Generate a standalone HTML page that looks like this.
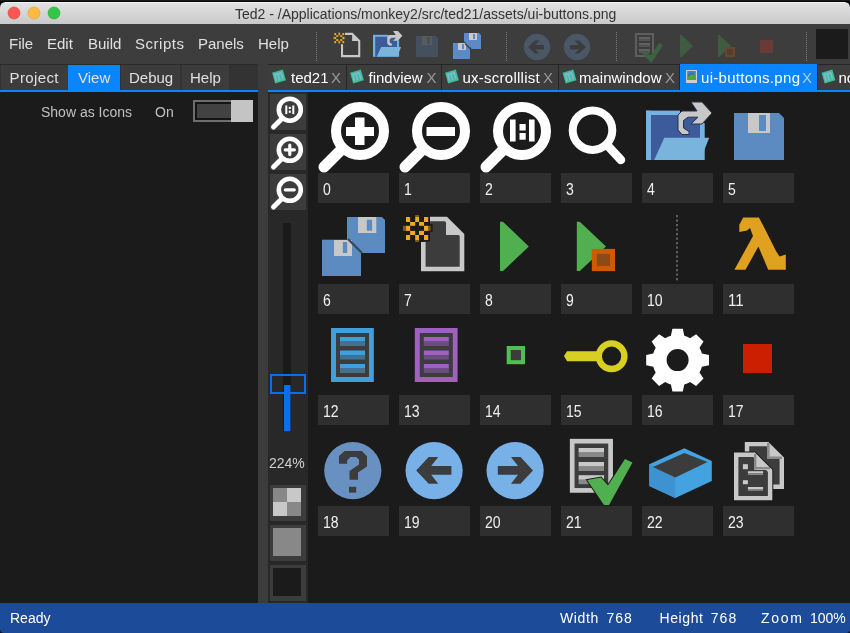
<!DOCTYPE html>
<html><head><meta charset="utf-8">
<style>
html,body{margin:0;padding:0;background:#000;width:850px;height:633px;overflow:hidden}
svg{display:block;will-change:transform}
text{font-family:"Liberation Sans",sans-serif}
</style></head><body>
<svg width="850" height="633" viewBox="0 0 850 633">
<defs>
<linearGradient id="tb" x1="0" y1="0" x2="0" y2="1">
<stop offset="0" stop-color="#e3e3e3"/><stop offset="1" stop-color="#c9c9c9"/>
</linearGradient>
</defs>
<!-- window bg -->
<rect x="0" y="0" width="850" height="633" fill="#050608"/>
<rect x="0" y="0" width="850" height="1" fill="#1a1a1a"/>
<!-- title bar -->
<path d="M0,8 Q0,2 6,2 L844,2 Q850,2 850,8 L850,24 L0,24 Z" fill="url(#tb)"/>
<rect x="5" y="2" width="840" height="1" fill="#f4f4f4"/>
<circle cx="14" cy="13" r="6" fill="#fc5753" stroke="#df3e3a" stroke-width="0.6"/>
<circle cx="34" cy="13" r="6" fill="#fdbc40" stroke="#de9f34" stroke-width="0.6"/>
<circle cx="54" cy="13" r="6" fill="#33c748" stroke="#27aa35" stroke-width="0.6"/>
<text x="235" y="18.5" font-size="14" fill="#333333">Ted2 - /Applications/monkey2/src/ted21/assets/ui-buttons.png</text>
<!-- toolbar -->
<rect x="0" y="24" width="850" height="40" fill="#3d3d3d"/>
<g font-size="15" fill="#e0e0e0">
<text x="9" y="49">File</text>
<text x="47" y="49">Edit</text>
<text x="88" y="49">Build</text>
<text x="135" y="49" textLength="49">Scripts</text>
<text x="198" y="49">Panels</text>
<text x="258" y="49">Help</text>
</g>
<!-- toolbar icons -->
<g stroke="#7c7c7c" stroke-width="1" stroke-dasharray="1,1">
<line x1="316.5" y1="32" x2="316.5" y2="61"/>
<line x1="506.5" y1="32" x2="506.5" y2="61"/>
<line x1="616.5" y1="32" x2="616.5" y2="61"/>
<line x1="806.5" y1="32" x2="806.5" y2="61"/>
</g>
<!-- new -->
<g transform="translate(341,33) scale(0.445) translate(-421,-217)">
<path d="M430,219 H446 L462,235 V269 H423.3 V242" fill="none" stroke="#c8c8c8" stroke-width="4.6"/>
<path d="M446,217 L464,235 H446 Z" fill="#c8c8c8"/>
<rect x="402" y="213" width="28" height="28.5" fill="#3d3d3d"/>
<g fill="#f2a81d"><rect x="406" y="217" width="4.1" height="5.0"/><rect x="415.2" y="217" width="3.8" height="5.0"/><rect x="424" y="217" width="4.2" height="5.0"/><rect x="410.1" y="222" width="5.1" height="3.8"/><rect x="419" y="222" width="5.0" height="3.8"/><rect x="406" y="225.8" width="4.1" height="5.1"/><rect x="424" y="225.8" width="4.2" height="5.1"/><rect x="410.1" y="230.9" width="5.1" height="4.1"/><rect x="419" y="230.9" width="5.0" height="4.1"/><rect x="406" y="235" width="4.1" height="5.0"/><rect x="415.2" y="235" width="3.8" height="5.0"/><rect x="424" y="235" width="4.2" height="5.0"/></g>
<g fill="#f2a81d" opacity="0.45"><rect x="415.2" y="215" width="3.8" height="2"/><rect x="415.2" y="240" width="3.8" height="2"/><rect x="403" y="225.8" width="3" height="5.1"/><rect x="428.2" y="225.8" width="2.4" height="5.1"/></g>
</g>
<!-- open -->
<g transform="translate(373,34.8) scale(0.445) translate(-646,-110.6)">
<rect x="646" y="110.6" width="34" height="49.4" fill="#74b2e2"/>
<rect x="651" y="115" width="49.5" height="45" fill="#3d5a9a"/>
<rect x="700" y="123" width="4.7" height="37" fill="#74b2e2"/>
<path d="M654.2,160 L664.3,137.8 H709.2 L700.3,160 Z" fill="#78b4dc"/>
<path d="M691,102 H702 L712,113 L702,124 H691 L698,117.2 H688 L683.5,120.5 V128 L689,131.5 V134.5 H682 L678,130 V115 L682,111 H697 Z" fill="#c8c8c8"/>
</g>
<!-- save disabled -->
<path d="M416,36 H436 L438,38 V57 H416 Z" fill="#44505d"/>
<rect x="422" y="36" width="10" height="9" fill="#5b5b5b"/>
<rect x="427" y="37" width="3" height="7" fill="#44505d"/>
<!-- save all -->
<path d="M464,33 H479 L481,35 V49 H464 Z" fill="#5b8ac4"/>
<rect x="469" y="33" width="8" height="7" fill="#c8c8c8"/>
<rect x="473" y="34" width="2" height="5" fill="#5b8ac4"/>
<path d="M464,42 L471,49" stroke="#3a3f48" stroke-width="1.5"/>
<rect x="453" y="43" width="17" height="16" fill="#5b8ac4"/>
<rect x="458" y="43" width="8" height="7" fill="#c8c8c8"/>
<rect x="462" y="44" width="2" height="5" fill="#5b8ac4"/>
<path d="M465,43.5 L470.5,49" stroke="#3a3f48" stroke-width="1.2"/>
<!-- back / fwd -->
<circle cx="537" cy="47" r="13.2" fill="#4a5767"/>
<circle cx="577" cy="47" r="13.2" fill="#4a5767"/>
<path d="M528,47 L535,40.5 L539.5,40.5 L535,45 H544 V49.4 H535 L539.5,53.5 L535,53.5 Z" fill="#3c3c3c"/>
<path d="M586,47 L579,40.5 L574.5,40.5 L579,45 H570 V49.4 H579 L574.5,53.5 L579,53.5 Z" fill="#3c3c3c"/>
<!-- build doc check -->
<rect x="636" y="34" width="17" height="22" fill="none" stroke="#5e5e5e" stroke-width="2"/>
<g fill="#626262">
<rect x="639" y="37" width="11" height="2.5"/><rect x="639" y="43" width="11" height="2.5"/><rect x="639" y="49" width="11" height="2.5"/>
</g>
<g fill="#555555">
<rect x="639" y="39.5" width="11" height="1.5"/><rect x="639" y="45.5" width="11" height="1.5"/><rect x="639" y="51.5" width="11" height="1.5"/>
</g>
<path d="M644,52 L651,59.5 L661,44" fill="none" stroke="#3d6241" stroke-width="4.4"/>
<!-- play -->
<path d="M680,35 H681.5 L693,46 L681.5,57 H680 Z" fill="#3f5b40"/>
<path d="M718,35 H719.5 L731,46 L719.5,57 H718 Z" fill="#3f5b40"/>
<rect x="726" y="48" width="8" height="8" fill="#4d4039" stroke="#6c4529" stroke-width="2"/>
<!-- stop -->
<rect x="760" y="40" width="13" height="13" fill="#6a3a34"/>
<!-- black box -->
<rect x="816" y="29" width="32" height="30" fill="#1b1b1b"/>
<!-- left tabs -->
<rect x="0" y="64" width="258" height="1" fill="#2a2a2a"/>
<rect x="0" y="65" width="258" height="25" fill="#333333"/>
<rect x="1" y="65" width="67" height="25" fill="#3c3c3c"/>
<rect x="68" y="65" width="52" height="25" fill="#0a84ff"/>
<rect x="121" y="65" width="59" height="25" fill="#3c3c3c"/>
<rect x="182" y="65" width="47" height="25" fill="#3c3c3c"/>
<rect x="0" y="90" width="258" height="2" fill="#0a84ff"/>
<g font-size="15" fill="#e0e0e0">
<text x="9.5" y="83" textLength="49">Project</text>
<text x="78" y="83">View</text>
<text x="129" y="83">Debug</text>
<text x="190" y="83">Help</text>
</g>
<!-- left panel -->
<rect x="0" y="92" width="258" height="511" fill="#1b1b1b"/>
<g font-size="14" fill="#c0c0c0">
<text x="41" y="117">Show as Icons</text>
<text x="155" y="117">On</text>
</g>
<rect x="193" y="100" width="60" height="22" fill="#6e6e6e"/>
<rect x="195" y="102" width="36" height="18" fill="#141414"/>
<rect x="197" y="104" width="34" height="14" fill="#424242"/>
<rect x="231" y="100" width="22" height="22" fill="#c4c4c4"/>
<!-- splitter -->
<rect x="258" y="64" width="10" height="539" fill="#3c3c3c"/>
<!-- doc tabs -->
<rect x="268" y="64" width="582" height="1" fill="#262626"/>
<rect x="268" y="65" width="582" height="25" fill="#3d3d3d"/>
<rect x="680" y="64" width="137" height="26" fill="#0a84ff"/>
<g fill="#262626">
<rect x="346" y="65" width="1" height="25"/>
<rect x="441" y="65" width="1" height="25"/>
<rect x="558" y="65" width="1" height="25"/>
<rect x="679" y="65" width="1" height="25"/>
<rect x="817" y="65" width="1" height="25"/>
</g>
<rect x="268" y="90" width="582" height="2" fill="#0a84ff"/>
<defs>
<g id="mico">
<rect x="-5.6" y="-5.6" width="11.2" height="11.2" fill="#3cbe92"/>
<path d="M-3.5,4 V-3 H3 V4 M-0.3,-3 V4" stroke="#7ab8d4" stroke-width="1.8" fill="none"/>
</g>
</defs>
<use href="#mico" transform="translate(279,76.5) rotate(-16)"/>
<use href="#mico" transform="translate(357,76.5) rotate(-16)"/>
<use href="#mico" transform="translate(452,76.5) rotate(-16)"/>
<use href="#mico" transform="translate(569.5,76.5) rotate(-16)"/>
<use href="#mico" transform="translate(828.5,76.5) rotate(-16)"/>
<!-- image icon in active tab -->
<rect x="686" y="70" width="11" height="13" fill="#d6ccc4"/>
<rect x="687.2" y="71" width="8.6" height="9" fill="#3b7fd6"/>
<path d="M687.2,80 V76.5 L690,75 L693,73.5 L695.8,75 V80 Z" fill="#4fa444"/>
<path d="M688,76 L691,73.5 L694,74.5" fill="none" stroke="#3a5a70" stroke-width="0.8"/>
<g font-size="15" fill="#ffffff">
<text x="291" y="83">ted21</text>
<text x="368.5" y="83">findview</text>
<text x="462.5" y="83" letter-spacing="0.25">ux-scrolllist</text>
<text x="579" y="83">mainwindow</text>
<text x="701" y="83" letter-spacing="0.3">ui-buttons.png</text>
<text x="838.5" y="83">no</text>
</g>
<g font-size="15" fill="#9a9a9a">
<text x="331" y="83">X</text>
<text x="426.5" y="83">X</text>
<text x="543" y="83">X</text>
<text x="665" y="83">X</text>
</g>
<text x="802" y="83" font-size="15" fill="#a8d0f8">X</text>
<!-- zoom column -->
<rect x="268" y="92" width="40" height="511" fill="#282828"/>
<g fill="#3c3c3c">
<rect x="270" y="94" width="36" height="36"/>
<rect x="270" y="134" width="36" height="36"/>
<rect x="270" y="174" width="36" height="36"/>
<rect x="270" y="485" width="36" height="36"/>
<rect x="270" y="525" width="36" height="36"/>
<rect x="270" y="565" width="36" height="36"/>
</g>
<g fill="none" stroke="#ffffff">
<circle cx="289.8" cy="109.7" r="11" stroke-width="4.6"/>
<circle cx="289.8" cy="149.8" r="11" stroke-width="4.6"/>
<circle cx="289.8" cy="189.8" r="11" stroke-width="4.6"/>
<path d="M281,119.5 L273.5,127 M281,159.5 L273.5,167 M281,199.5 L273.5,207" stroke-width="5" stroke-linecap="round"/>
<path d="M285.2,149.8 H294.4 M289.8,145.2 V154.4 M285.3,189.8 H294.3" stroke-width="3.2" stroke-linecap="round"/>
</g>
<g fill="#ffffff">
<rect x="285.3" y="105.5" width="2" height="8.6"/><rect x="292.3" y="105.5" width="2" height="8.6"/>
<rect x="288.8" y="106.8" width="2" height="2.2"/><rect x="288.8" y="110.6" width="2" height="2.2"/>
</g>
<rect x="283" y="223" width="8" height="208" fill="#1a1a1a"/>
<rect x="284" y="385" width="6.5" height="46" fill="#0a6ef0"/>
<rect x="271" y="375" width="34" height="18" fill="none" stroke="#0a6ef0" stroke-width="2"/>
<text x="269" y="468" font-size="14" fill="#d0d0d0">224%</text>
<rect x="273" y="488" width="14" height="14" fill="#888888"/>
<rect x="287" y="488" width="14" height="14" fill="#c8c8c8"/>
<rect x="273" y="502" width="14" height="14" fill="#c8c8c8"/>
<rect x="287" y="502" width="14" height="14" fill="#888888"/>
<rect x="273" y="528" width="28" height="28" fill="#888888"/>
<rect x="273" y="568" width="28" height="28" fill="#1b1b1b"/>
<!-- canvas -->
<rect x="308" y="92" width="542" height="511" fill="#1b1b1b"/>
<g fill="#2f2f2f">
<rect x="318" y="173" width="71" height="30"/>
<rect x="399" y="173" width="71" height="30"/>
<rect x="480" y="173" width="71" height="30"/>
<rect x="561" y="173" width="71" height="30"/>
<rect x="642" y="173" width="71" height="30"/>
<rect x="723" y="173" width="71" height="30"/>
<rect x="318" y="284" width="71" height="30"/>
<rect x="399" y="284" width="71" height="30"/>
<rect x="480" y="284" width="71" height="30"/>
<rect x="561" y="284" width="71" height="30"/>
<rect x="642" y="284" width="71" height="30"/>
<rect x="723" y="284" width="71" height="30"/>
<rect x="318" y="395" width="71" height="30"/>
<rect x="399" y="395" width="71" height="30"/>
<rect x="480" y="395" width="71" height="30"/>
<rect x="561" y="395" width="71" height="30"/>
<rect x="642" y="395" width="71" height="30"/>
<rect x="723" y="395" width="71" height="30"/>
<rect x="318" y="506" width="71" height="30"/>
<rect x="399" y="506" width="71" height="30"/>
<rect x="480" y="506" width="71" height="30"/>
<rect x="561" y="506" width="71" height="30"/>
<rect x="642" y="506" width="71" height="30"/>
<rect x="723" y="506" width="71" height="30"/>
</g>
<g font-size="16" fill="#f0f0f0">
<text x="323" y="194.8" textLength="7.8" lengthAdjust="spacingAndGlyphs">0</text>
<text x="404" y="194.8" textLength="7.8" lengthAdjust="spacingAndGlyphs">1</text>
<text x="485" y="194.8" textLength="7.8" lengthAdjust="spacingAndGlyphs">2</text>
<text x="566" y="194.8" textLength="7.8" lengthAdjust="spacingAndGlyphs">3</text>
<text x="647" y="194.8" textLength="7.8" lengthAdjust="spacingAndGlyphs">4</text>
<text x="728" y="194.8" textLength="7.8" lengthAdjust="spacingAndGlyphs">5</text>
<text x="323" y="305.8" textLength="7.8" lengthAdjust="spacingAndGlyphs">6</text>
<text x="404" y="305.8" textLength="7.8" lengthAdjust="spacingAndGlyphs">7</text>
<text x="485" y="305.8" textLength="7.8" lengthAdjust="spacingAndGlyphs">8</text>
<text x="566" y="305.8" textLength="7.8" lengthAdjust="spacingAndGlyphs">9</text>
<text x="647" y="305.8" textLength="15.6" lengthAdjust="spacingAndGlyphs">10</text>
<text x="728" y="305.8" textLength="15.6" lengthAdjust="spacingAndGlyphs">11</text>
<text x="323" y="416.8" textLength="15.6" lengthAdjust="spacingAndGlyphs">12</text>
<text x="404" y="416.8" textLength="15.6" lengthAdjust="spacingAndGlyphs">13</text>
<text x="485" y="416.8" textLength="15.6" lengthAdjust="spacingAndGlyphs">14</text>
<text x="566" y="416.8" textLength="15.6" lengthAdjust="spacingAndGlyphs">15</text>
<text x="647" y="416.8" textLength="15.6" lengthAdjust="spacingAndGlyphs">16</text>
<text x="728" y="416.8" textLength="15.6" lengthAdjust="spacingAndGlyphs">17</text>
<text x="323" y="527.8" textLength="15.6" lengthAdjust="spacingAndGlyphs">18</text>
<text x="404" y="527.8" textLength="15.6" lengthAdjust="spacingAndGlyphs">19</text>
<text x="485" y="527.8" textLength="15.6" lengthAdjust="spacingAndGlyphs">20</text>
<text x="566" y="527.8" textLength="15.6" lengthAdjust="spacingAndGlyphs">21</text>
<text x="647" y="527.8" textLength="15.6" lengthAdjust="spacingAndGlyphs">22</text>
<text x="728" y="527.8" textLength="15.6" lengthAdjust="spacingAndGlyphs">23</text>
</g>
<circle cx="360" cy="131" r="24" fill="none" stroke="#ffffff" stroke-width="10"/>
<path d="M342,149 L324,167" stroke="#ffffff" stroke-width="11" stroke-linecap="round"/>
<circle cx="441" cy="131" r="24" fill="none" stroke="#ffffff" stroke-width="10"/>
<path d="M423,149 L405,167" stroke="#ffffff" stroke-width="11" stroke-linecap="round"/>
<circle cx="522" cy="131" r="24" fill="none" stroke="#ffffff" stroke-width="10"/>
<path d="M504,149 L486,167" stroke="#ffffff" stroke-width="11" stroke-linecap="round"/>
<rect x="346" y="127" width="28" height="9" fill="#ffffff"/><rect x="355" y="117.5" width="9.5" height="27.5" fill="#ffffff"/>
<rect x="426.5" y="127" width="28.5" height="9" fill="#ffffff"/>
<rect x="510" y="119.5" width="5.6" height="22" fill="#ffffff"/><rect x="529" y="119.5" width="5.6" height="22" fill="#ffffff"/>
<rect x="519.5" y="124" width="6.2" height="6.5" fill="#ffffff"/><rect x="519.5" y="133" width="6.2" height="6.7" fill="#ffffff"/>
<circle cx="592.5" cy="130.2" r="19.8" fill="none" stroke="#ffffff" stroke-width="8"/>
<path d="M608,146 L621,160" stroke="#ffffff" stroke-width="8.5" stroke-linecap="round"/>
<rect x="646" y="110.6" width="34" height="49.4" fill="#74b2e2"/>
<rect x="646" y="110.6" width="5" height="49.4" fill="#74b2e2"/>
<rect x="651" y="115" width="49.5" height="45" fill="#3d5a9a"/>
<rect x="700" y="123" width="4.7" height="37" fill="#74b2e2"/>
<path d="M654.2,160 L664.3,137.8 H709.2 L700.3,160 Z" fill="#78b4dc"/>
<path d="M691,102 H702 L712,113 L702,124 H691 L698,117.2 H688 L683.5,120.5 V128 L689,131.5 V134.5 H682 L678,130 V115 L682,111 H697 Z" fill="#c8c8c8" stroke="#26324a" stroke-width="1"/>
<path d="M734,113 H779 L784,118 V160 H734 Z" fill="#5b8bc0"/>
<rect x="748" y="113" width="22" height="20" fill="#c8c8c8"/>
<rect x="759" y="115" width="7" height="16" fill="#5b8bc0"/>
<path d="M347,217 H382 L385,220 V253 H347 Z" fill="#5b8bc0"/>
<rect x="358" y="217" width="18.3" height="16" fill="#c8c8c8"/>
<rect x="366.8" y="219.7" width="5.3" height="11" fill="#5b8bc0"/>
<rect x="322" y="239.7" width="39" height="36.3" fill="#5b8bc0"/>
<rect x="334" y="240" width="18" height="16" fill="#c8c8c8"/>
<rect x="342.8" y="242" width="4.4" height="11" fill="#5b8bc0"/>
<path d="M348,239 L362,253" stroke="#3a4a5c" stroke-width="2.4"/>
<path d="M430,219 H446 L462,235 V269 H423.3 V242" fill="#3c3c3c" stroke="#c8c8c8" stroke-width="4.6"/>
<path d="M446,217 L464,235 H446 Z" fill="#c8c8c8"/>
<rect x="402" y="213" width="28" height="28.5" fill="#1b1b1b"/><rect x="425" y="224" width="7.6" height="8" fill="#1b1b1b"/>
<g fill="#f0a820">
<rect x="406" y="217" width="4.1" height="5.0"/>
<rect x="415.2" y="217" width="3.8" height="5.0"/>
<rect x="424" y="217" width="4.2" height="5.0"/>
<rect x="410.1" y="222" width="5.1" height="3.8"/>
<rect x="419" y="222" width="5.0" height="3.8"/>
<rect x="406" y="225.8" width="4.1" height="5.1"/>
<rect x="424" y="225.8" width="4.2" height="5.1"/>
<rect x="410.1" y="230.9" width="5.1" height="4.1"/>
<rect x="419" y="230.9" width="5.0" height="4.1"/>
<rect x="406" y="235" width="4.1" height="5.0"/>
<rect x="415.2" y="235" width="3.8" height="5.0"/>
<rect x="424" y="235" width="4.2" height="5.0"/>
</g>
<g fill="#f0a820" opacity="0.45">
<rect x="415.2" y="215" width="3.8" height="2"/><rect x="415.2" y="240" width="3.8" height="2"/>
<rect x="403" y="225.8" width="3" height="5.1"/><rect x="428.2" y="225.8" width="2.4" height="5.1"/>
</g>
<path d="M500,221.8 H503 L528.8,246.5 L503,271.1 H500 Z" fill="#50b050"/>
<path d="M576.8,221.8 H579.8 L606,246.5 L579.8,271.1 H576.8 Z" fill="#50b050"/>
<rect x="594.3" y="251.4" width="18.2" height="17.2" fill="#8a4a1a" stroke="#d05a00" stroke-width="5"/>
<line x1="677" y1="215" x2="677" y2="280.5" stroke="#5e5e5e" stroke-width="2" stroke-dasharray="2.2,2.3"/>
<path d="M743.2,217.4 L758.9,217.4 L763.3,225.7 L776,251 L779.5,256.5 L785.8,254.5 V269.8 H768.2 L758.4,246.5 L745.5,269.8 H734.4 L753,236 L750,228 L747,230.5 L739.3,232 V224.7 Z" fill="#e0a020"/>
<rect x="331" y="328" width="42.8" height="54" fill="#40a0dc"/>
<rect x="336" y="333" width="33" height="44" fill="#3c3c3c"/>
<rect x="340" y="337" width="25" height="4.6" fill="#40a0dc"/>
<rect x="340" y="341.6" width="25" height="4.4" fill="#46708c"/>
<rect x="340" y="350.5" width="25" height="4.6" fill="#40a0dc"/>
<rect x="340" y="355.1" width="25" height="4.4" fill="#46708c"/>
<rect x="340" y="364" width="25" height="4.6" fill="#40a0dc"/>
<rect x="340" y="368.6" width="25" height="4.4" fill="#46708c"/>
<rect x="414.8" y="328" width="42.8" height="54" fill="#a060c0"/>
<rect x="419.8" y="333" width="33" height="44" fill="#3c3c3c"/>
<rect x="423.8" y="337" width="25" height="4.6" fill="#a060c0"/>
<rect x="423.8" y="341.6" width="25" height="4.4" fill="#6e4c80"/>
<rect x="423.8" y="350.5" width="25" height="4.6" fill="#a060c0"/>
<rect x="423.8" y="355.1" width="25" height="4.4" fill="#6e4c80"/>
<rect x="423.8" y="364" width="25" height="4.6" fill="#a060c0"/>
<rect x="423.8" y="368.6" width="25" height="4.4" fill="#6e4c80"/>
<rect x="508.7" y="348" width="14.3" height="14.2" fill="#3c3c3c" stroke="#50c050" stroke-width="4"/>
<circle cx="611.6" cy="356.2" r="12.8" fill="none" stroke="#d8d020" stroke-width="6.4"/>
<path d="M564,356 L567,351.2 H599 V361.2 H567 Z" fill="#d8d020"/>
<path d="M668.0,336.8 L670.9,335.8 L672.4,328.7 L682.8,328.7 L684.3,335.8 L687.2,336.8 L690.0,338.2 L696.1,334.2 L703.5,341.6 L699.5,347.7 L700.9,350.5 L701.9,353.4 L709.0,354.9 L709.0,365.3 L701.9,366.8 L700.9,369.7 L699.5,372.5 L703.5,378.6 L696.1,386.0 L690.0,382.0 L687.2,383.4 L684.3,384.4 L682.8,391.5 L672.4,391.5 L670.9,384.4 L668.0,383.4 L665.2,382.0 L659.1,386.0 L651.7,378.6 L655.7,372.5 L654.3,369.7 L653.3,366.8 L646.2,365.3 L646.2,354.9 L653.3,353.4 L654.3,350.5 L655.7,347.7 L651.7,341.6 L659.1,334.2 L665.2,338.2 Z" fill="#ffffff"/>
<circle cx="677.6" cy="360.1" r="11" fill="#1b1b1b"/>
<rect x="743" y="344" width="29" height="29" fill="#cc1e00"/>
<circle cx="352.8" cy="470.6" r="28.6" fill="#6890c0"/>
<path d="M339,463.7 V456 L344.7,451 H361.8 L367,456.2 V466.6 L358,472.5 V479.8 H349.5 V471 L359,464.5 V459.5 L356,457.1 H350.4 L347.1,460.5 V463.7 Z" fill="#3c3c3c"/>
<rect x="349" y="486.8" width="7.2" height="5.8" fill="#3c3c3c"/>
<circle cx="434.1" cy="470.6" r="28.6" fill="#78b0e8"/>
<path d="M451.4,466.1 H431.2 L438.2,457.1 H428.7 L416.2,470.5 L428.7,483.7 H438.2 L431.2,474.8 H451.4 Z" fill="#3c3c3c"/>
<circle cx="515.1" cy="470.6" r="28.6" fill="#78b0e8"/>
<path d="M497.8,466.1 H518 L511,457.1 H520.5 L533,470.5 L520.5,483.7 H511 L518,474.8 H497.8 Z" fill="#3c3c3c"/>
<rect x="572.2" y="441.2" width="38.4" height="49.2" fill="#3c3c3c" stroke="#c8c8c8" stroke-width="4.7"/>
<rect x="578.6" y="448" width="25.4" height="4.6" fill="#c8c8c8"/>
<rect x="578.6" y="452.6" width="25.4" height="4.4" fill="#888888"/>
<rect x="578.6" y="462" width="25.4" height="4.6" fill="#c8c8c8"/>
<rect x="578.6" y="466.6" width="25.4" height="4.4" fill="#888888"/>
<rect x="578.6" y="475.2" width="25.4" height="4.6" fill="#c8c8c8"/>
<rect x="578.6" y="479.8" width="25.4" height="4.4" fill="#888888"/>
<path d="M587.2,480 L601,477.5 L608,485.5 L625,459 L632.5,462.5 L609,505 H604 Z" fill="#50b050" stroke="#1b1b1b" stroke-width="2" paint-order="stroke"/>
<path d="M649.3,464.3 L684.3,448.2 L711.8,461 V480.9 L675.3,497.9 L649.3,486.1 Z" fill="#43a2e0"/>
<path d="M649.3,464.3 L675.3,477 V497.9 L649.3,486.1 Z" fill="#3d93d2"/>
<path d="M653,467.1 L684.3,453 L707.5,462 L675.3,477.6 Z" fill="#3c3c3c"/>
<path d="M747,444.1 H767.5 L781.8,458.5 V486.8 H747 Z" fill="#3c3c3c" stroke="#c8c8c8" stroke-width="4.4"/>
<path d="M767,441.9 L784,459 H767 Z" fill="#c8c8c8"/>
<rect x="767" y="443" width="2.6" height="16" fill="#8a8a8a"/><rect x="767" y="456.5" width="15" height="2.5" fill="#8a8a8a"/>
<path d="M736.2,454.8 H754 L770.1,471 V498.1 H736.2 Z" fill="#3c3c3c" stroke="#1b1b1b" stroke-width="6.4"/>
<path d="M736.2,454.8 H754 L770.1,471 V498.1 H736.2 Z" fill="#3c3c3c" stroke="#c8c8c8" stroke-width="4.4"/>
<path d="M754,452.6 L772.3,470 H754 Z" fill="#c8c8c8"/>
<rect x="754" y="454" width="2.4" height="15.5" fill="#8a8a8a"/><rect x="754" y="467" width="16" height="2.3" fill="#8a8a8a"/>
<rect x="742.9" y="464.2" width="5" height="5" fill="#c8c8c8"/><rect x="742.9" y="480.2" width="5" height="4" fill="#c8c8c8"/>
<rect x="747.9" y="471.2" width="15.2" height="2" fill="#c8c8c8"/><rect x="747.9" y="473.2" width="15.2" height="1.8" fill="#888888"/>
<rect x="747.9" y="487" width="15.2" height="2" fill="#c8c8c8"/><rect x="747.9" y="489" width="15.2" height="1.8" fill="#888888"/>
<!-- status -->
<rect x="0" y="603" width="850" height="30" fill="#1c4b99"/>
<path d="M0,629 Q0,633 4,633 H0 Z M850,629 Q850,633 846,633 H850 Z" fill="#0b0e14"/>
<g font-size="14" fill="#ffffff">
<text x="10" y="623">Ready</text>
<text x="560" y="623" textLength="38.3">Width</text>
<text x="606.5" y="623" textLength="25.3">768</text>
<text x="659.5" y="623" textLength="43.5">Height</text>
<text x="710.7" y="623" textLength="25.5">768</text>
<text x="761" y="623" textLength="40.8">Zoom</text>
<text x="810" y="623">100%</text>
</g>
</svg>
</body></html>
